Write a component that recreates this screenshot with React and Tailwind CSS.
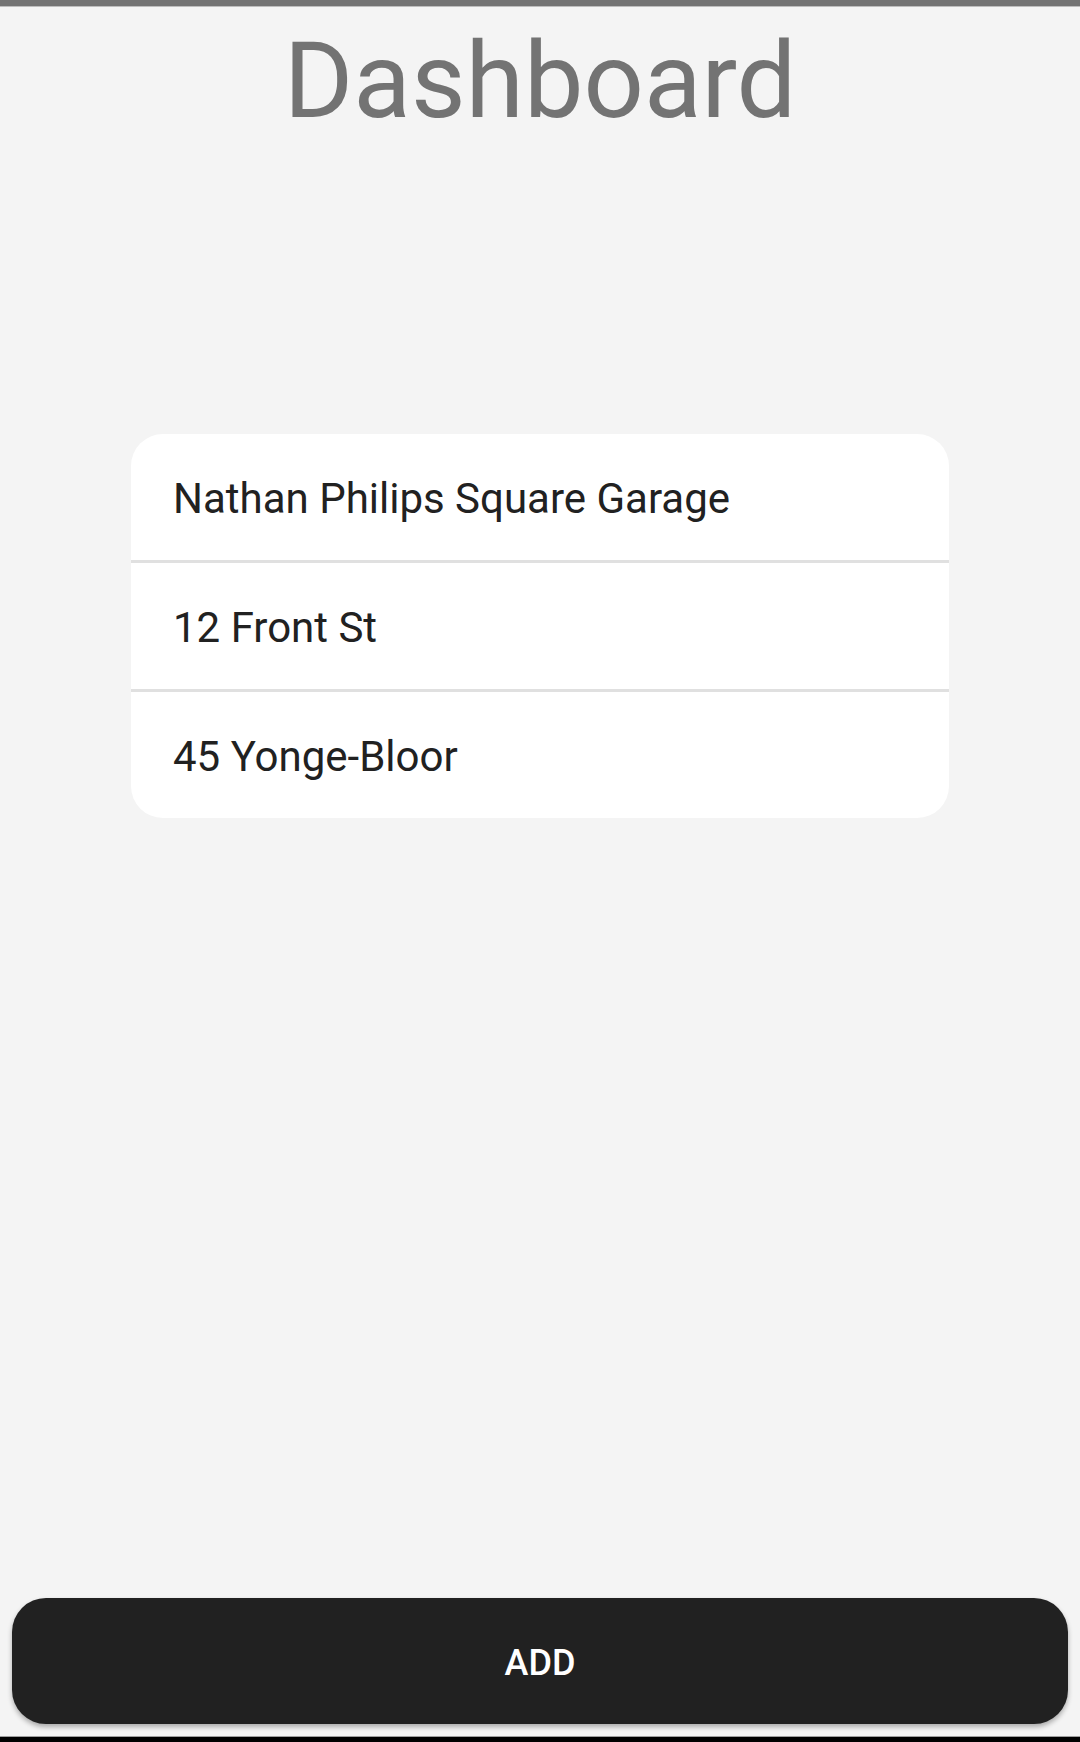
import React from "react";

const garages = ["Nathan Philips Square Garage", "12 Front St", "45 Yonge-Bloor"];

const App = () => {
  return (
    <div
      className="flex h-[1742px] w-[1080px] flex-col bg-[#f4f4f4]"
      style={{ fontFamily: "Roboto, 'Noto Sans', sans-serif" }}
    >
      {/* status strip */}
      <div className="h-[6px] bg-[#737373]" />
      <div className="h-px bg-[#bdbdbd]" />

      <h1 className="mt-[21px] text-center text-[106px] leading-none font-normal text-[#737373]">
        Dashboard
      </h1>

      {/* garage list */}
      <div className="mx-auto mt-[300px] w-[818px] overflow-hidden rounded-[32px] bg-white">
        {garages.map((name, i) => (
          <div key={name}>
            {i > 0 && <div className="h-[3px] bg-[#e0e0e0]" />}
            <div className="flex h-[126px] items-center pt-[2px] pl-[42px] text-[42px] text-[#212121]">
              {name}
            </div>
          </div>
        ))}
      </div>

      <div className="flex-1" />

      <button className="mx-[12px] mb-[12px] flex h-[126px] items-center justify-center rounded-[34px] bg-[#212121] pt-[3px] text-[36px] font-medium text-white shadow-[0_3px_5px_rgba(0,0,0,0.3)]">
        ADD
      </button>

      <div className="h-px bg-[#9e9e9e]" />
      <div className="h-[5px] bg-black" />
    </div>
  );
};

export default App;
